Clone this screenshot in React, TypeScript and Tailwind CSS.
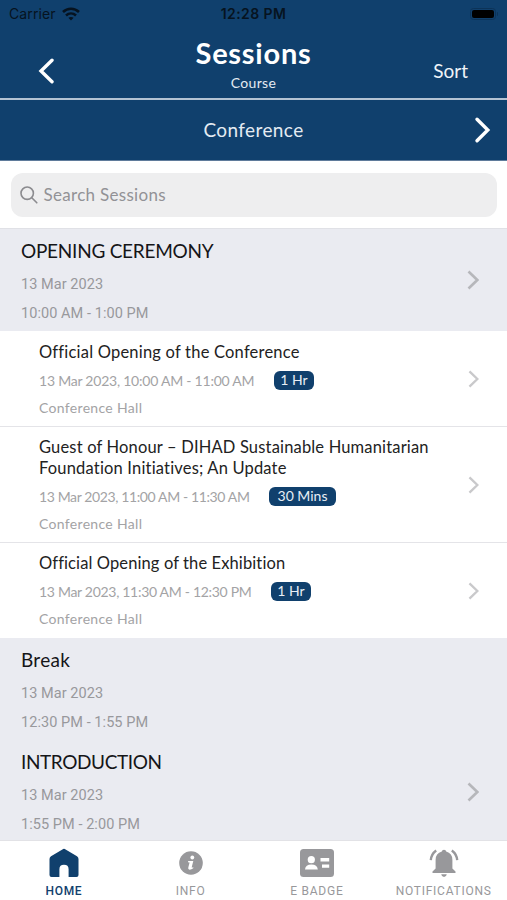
import React from "react";

const NOVA = "font-['Lato','Liberation_Sans',sans-serif]";
const ROBOTO = "font-['Roboto','Liberation_Sans',sans-serif]";

type Talk = {
  title: string[];
  titleTracking: string[];
  time: string;
  timeWidth: string;
  timeTracking: string;
  badge: string;
  badgeWidth: string;
  height: string;
  padTop: string;
};

const talks: Talk[] = [
  {
    title: ["Official Opening of the Conference"],
    titleTracking: ["tracking-[0.21px]"],
    time: "13 Mar 2023, 10:00 AM - 11:00 AM",
    timeWidth: "w-[235px]",
    timeTracking: "tracking-[-0.23px]",
    badge: "1 Hr",
    badgeWidth: "w-[40px]",
    height: "h-[96px]",
    padTop: "pt-[11px]",
  },
  {
    title: [
      "Guest of Honour – DIHAD Sustainable Humanitarian",
      "Foundation Initiatives; An Update",
    ],
    titleTracking: ["tracking-[0.17px]", "tracking-[0.18px]"],
    time: "13 Mar 2023, 11:00 AM - 11:30 AM",
    timeWidth: "w-[230px]",
    timeTracking: "tracking-[-0.38px]",
    badge: "30 Mins",
    badgeWidth: "w-[67px]",
    height: "h-[116px]",
    padTop: "pt-[10px]",
  },
  {
    title: ["Official Opening of the Exhibition"],
    titleTracking: ["tracking-[0.11px]"],
    time: "13 Mar 2023, 11:30 AM - 12:30 PM",
    timeWidth: "w-[232px]",
    timeTracking: "tracking-[-0.3px]",
    badge: "1 Hr",
    badgeWidth: "w-[40px]",
    height: "h-[95px]",
    padTop: "pt-[10px]",
  },
];

function Chevron({ className }: { className: string }) {
  return (
    <svg viewBox="0 0 12 20" className={className} fill="none" stroke="currentColor">
      <path d="M1.5 1.5 L10.3 10 L1.5 18.5" strokeWidth="2.6" />
    </svg>
  );
}

type SectionProps = { title: string; tracking: string; time: string; arrow: boolean; height: string };

function Section({ title, tracking, time, arrow, height }: SectionProps) {
  return (
    <section className={`${height} flex items-center justify-between bg-[#eaebf1] pl-[21px] pr-[28px]`}>
      <div className="h-full pt-[11px]">
        <h2 className={`${NOVA} ${tracking} text-[19px] leading-[22px] text-[#151518]`}>{title}</h2>
        <div className={`${ROBOTO} mt-[8px] text-[14.5px] leading-[29px] text-[#98989c]`}>
          <p className="tracking-[0.05px]">13 Mar 2023</p>
          <p className="tracking-[0.06px]">{time}</p>
        </div>
      </div>
      {arrow && <Chevron className="h-[20px] w-[12px] text-[#b6b7bb]" />}
    </section>
  );
}

function TalkRow({ talk, last }: { talk: Talk; last: boolean }) {
  return (
    <article
      className={`${talk.height} ${NOVA} flex items-center justify-between bg-white pl-[39px] pr-[28px] ${last ? "" : "border-b border-[#e4e4e8]"}`}
    >
      <div className={`${talk.padTop} h-full`}>
        {talk.title.map((line, i) => (
          <h3 key={line} className={`${talk.titleTracking[i]} whitespace-nowrap text-[16.5px] leading-[21px] text-[#222]`}>
            {line}
          </h3>
        ))}
        <div className="mt-[4px] flex h-[27px] items-center text-[14px] text-[#a3a3a5]">
          <span className={`${talk.timeWidth} ${talk.timeTracking} whitespace-nowrap`}>{talk.time}</span>
          <span
            className={`${talk.badgeWidth} h-[19px] rounded-[6px] bg-[#10406d] text-center leading-[18px] text-[#e8eef5]`}
          >
            {talk.badge}
          </span>
        </div>
        <p className="text-[14px] leading-[27px] tracking-[0.32px] text-[#a3a3a5]">Conference Hall</p>
      </div>
      <Chevron className="h-[18px] w-[11px] text-[#c9c9cb]" />
    </article>
  );
}

export default function App() {
  return (
    <div className={`${NOVA} flex h-[900px] w-[507px] flex-col overflow-hidden bg-white`}>
      <header className="border-b border-[#5f7b9b] bg-[#10406d] text-white">
        <div className="grid h-[28px] grid-cols-3 items-center px-[9px] font-['Inter','Liberation_Sans',sans-serif] text-[14px] leading-[28px] text-[#061320]">
          <div className="flex items-center gap-[6px]">
            <span className="tracking-[0.1px]">Carrier</span>
            <svg viewBox="0 0 18 14" className="h-[14px] w-[18px]" fill="none" stroke="#061320" strokeWidth="2.6">
              <path d="M1 5 C5.5 0.7 12.5 0.7 17 5" />
              <path d="M4 8.5 C7 5.8 11 5.8 14 8.5" />
              <path d="M6.4 10.8 C8 9.6 10 9.6 11.6 10.8 L9 13.6 Z" fill="#061320" stroke="none" />
            </svg>
          </div>
          <span className="text-center font-semibold tracking-[0.4px]">12:28 PM</span>
          <div className="flex items-center justify-end">
            <div className="h-[12px] w-[26px] rounded-[3.5px] border border-[#0c3358] p-px">
              <div className="h-full rounded-[2px] bg-black" />
            </div>
            <div className="ml-px h-[4px] w-[1.5px] rounded-r bg-[#0c3358]" />
          </div>
        </div>
        <div className="grid h-[70px] grid-cols-3">
          <div className="pl-[38px] pt-[30px]">
            <svg viewBox="0 0 16 26" className="h-[26px] w-[16px]" fill="none" stroke="white" strokeWidth="3.4" strokeLinecap="round">
              <path d="M14 2.2 L3 13 L14 23.8" />
            </svg>
          </div>
          <div className="pt-[8px] text-center">
            <h1 className="text-[29px] font-bold leading-[34px] tracking-[0.75px]">Sessions</h1>
            <p className="mt-[3px] text-[14px] leading-[20px] tracking-[0.3px] text-[#e4ebf2]">Course</p>
          </div>
          <div className="pr-[39px] pt-[30px] text-right text-[19px] leading-[25px] text-[#f0f4f8]">Sort</div>
        </div>
        <div className="grid h-[62px] grid-cols-3 items-center border-t-2 border-[#b4c3d3] text-[19px]">
          <span />
          <span className="text-center tracking-[0.4px] text-[#e4ebf2]">Conference</span>
          <svg viewBox="0 0 17 28" className="mr-[16px] h-[28px] w-[17px] justify-self-end" fill="none" stroke="white" strokeWidth="3.4" strokeLinecap="round">
            <path d="M3 3.2 L13.8 14 L3 24.8" />
          </svg>
        </div>
      </header>

      <div className="h-[68px] shrink-0 border-b border-[#e0e1e6] bg-white px-[10.5px] pt-[11.5px]">
        <div className="flex h-[44px] items-center rounded-[12px] bg-[#eeeeef] pl-[9px]">
          <svg viewBox="0 0 18 18" className="h-[18px] w-[18px]" fill="none" stroke="#8b8b8f" strokeWidth="1.6" strokeLinecap="round">
            <circle cx="7.2" cy="7.2" r="6.2" />
            <path d="M11.8 11.8 L16.8 16.8" />
          </svg>
          <span className="ml-[6px] text-[17px] tracking-[0.3px] text-[#929296]">Search Sessions</span>
        </div>
      </div>

      <main className="h-[611px] shrink-0 overflow-hidden bg-[#eaebf1]">
        <Section title="OPENING CEREMONY" tracking="tracking-[-0.25px]" time="10:00 AM - 1:00 PM" height="h-[102px]" arrow />
        {talks.map((t, i) => (
          <TalkRow key={t.time} talk={t} last={i === talks.length - 1} />
        ))}
        <Section title="Break" tracking="tracking-[0.3px]" time="12:30 PM - 1:55 PM" height="h-[102.4px]" arrow={false} />
        <Section title="INTRODUCTION" tracking="tracking-[-0.4px]" time="1:55 PM - 2:00 PM" height="h-[103px]" arrow />
      </main>

      <nav className={`${ROBOTO} grid h-[60px] grid-cols-4 border-t border-[#e2e2e6] bg-white text-[12px] text-[#98989b]`}>
        <div className="flex flex-col items-center pl-px text-[#10406d]">
          <svg viewBox="0 0 30 30" className="mt-[7px] h-[30px] w-[30px]" fill="currentColor">
            <path d="M15 0.8 Q15.8 0.8 16.6 1.4 L28 8.3 Q29.5 9.3 29.5 11 V27 Q29.5 29 27.5 29 H19.6 V21.2 Q19.6 16.8 15 16.8 Q10.4 16.8 10.4 21.2 V29 H2.5 Q0.5 29 0.5 27 V11 Q0.5 9.3 2 8.3 L13.4 1.4 Q14.2 0.8 15 0.8 Z" />
          </svg>
          <span className="mt-[5px] font-medium leading-[16px] tracking-[0.65px]">HOME</span>
        </div>
        <div className="flex flex-col items-center pl-px">
          <svg viewBox="0 0 24 24" className="mt-[10px] h-[24px] w-[24px]">
            <circle cx="12" cy="12" r="11.8" fill="#98989b" />
            <circle cx="13.3" cy="6.5" r="1.9" fill="white" />
            <path d="M9.2 10 H14.3 L12.7 16.2 Q12.6 17 14.4 16.2 L14.2 17.3 Q12 19 10 18.6 Q8.9 18.1 9.3 16.6 L10.6 11.5 L9 11.2 Z" fill="white" />
          </svg>
          <span className="mt-[8px] leading-[16px] tracking-[0.7px]">INFO</span>
        </div>
        <div className="flex flex-col items-center">
          <svg viewBox="0 0 34 28" className="mt-[8px] h-[28px] w-[34px]">
            <rect width="34" height="28" rx="3.5" fill="#98989b" />
            <circle cx="11.3" cy="10.7" r="3.6" fill="white" />
            <path d="M5 20.5 Q5.5 15.5 11.4 15.5 Q17.3 15.5 17.8 20.5 Z" fill="white" />
            <path d="M20.5 9 H29.2 V12.5 H20.5 Z M22 15.5 H29.2 V18.7 H22 Z" fill="white" />
          </svg>
          <span className="mt-[6px] leading-[16px] tracking-[0.75px]">E BADGE</span>
        </div>
        <div className="flex flex-col items-center">
          <svg viewBox="0 0 30 28" className="mt-[8px] h-[28px] w-[30px]" fill="#98989b">
            <path d="M15 0.8 Q17 0.8 17.2 2.6 Q23.4 4.2 23.4 11 V19.5 L26.5 22.6 V24 H3.5 V22.6 L6.6 19.5 V11 Q6.6 4.2 12.8 2.6 Q13 0.8 15 0.8 Z" />
            <path d="M12.2 25.2 H17.8 Q17.3 28 15 28 Q12.7 28 12.2 25.2 Z" />
            <path d="M7.2 1.6 Q2.4 5 1.8 11.2 M22.8 1.6 Q27.6 5 28.2 11.2" fill="none" stroke="#98989b" strokeWidth="2.4" />
          </svg>
          <span className="mt-[6px] whitespace-nowrap leading-[16px] tracking-[0.75px]">NOTIFICATIONS</span>
        </div>
      </nav>
    </div>
  );
}
